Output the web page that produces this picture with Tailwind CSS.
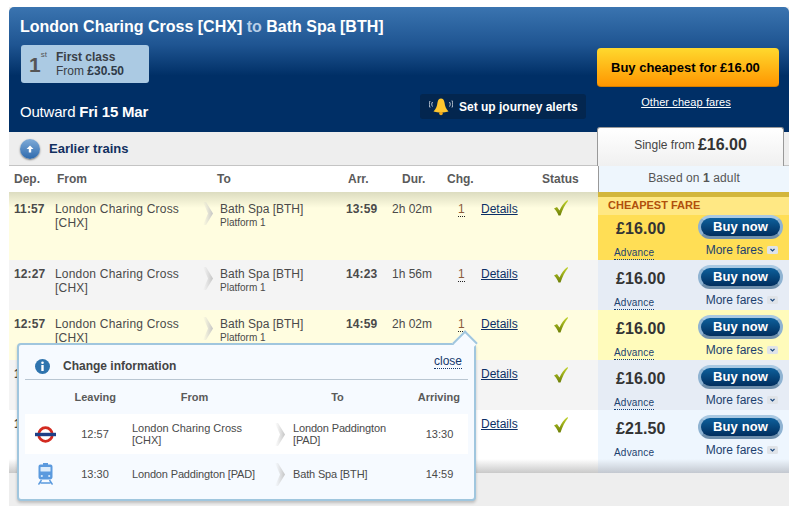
<!DOCTYPE html>
<html lang="en">
<head>
<meta charset="UTF-8" />
<title>Train times</title>
<script src="https://cdn.jsdelivr.net/npm/@tailwindcss/browser@4"></script>
</head>
<body class="bg-white overflow-hidden font-['Liberation_Sans',Arial,sans-serif]">
<svg class="absolute w-0 h-0">
  <defs>
    <linearGradient id="chev" x1="0" y1="0" x2="1" y2="0">
      <stop offset="0" stop-color="#d0d0d0" stop-opacity="0" />
      <stop offset="1" stop-color="#c4c4c4" />
    </linearGradient>
    <linearGradient id="tick" x1="0" y1="0" x2="0" y2="1">
      <stop offset="0" stop-color="#c2d42c" />
      <stop offset="1" stop-color="#6d7f06" />
    </linearGradient>
    <symbol id="arrow" viewBox="0 0 10 23"><path d="M0 0H3L10 11.500 3 23H0L5 11.500Z" fill="url(#chev)" /></symbol>
    <symbol id="check" viewBox="0 0 14 16"><path d="M0 8.500 3 7 5.500 10.500C7.500 6 10 2.500 13.500 0L14 1C11 4.500 8.500 9.500 6.500 15.500H4.500C3.500 12.500 2 10.500 0 8.500Z" fill="url(#tick)" /></symbol>
    <symbol id="down" viewBox="0 0 11 8"><rect width="11" height="8" rx="1.500" fill="#dfe3e8" /><path d="M3.500 3 5.500 5 7.500 3" fill="none" stroke="#1c4a80" stroke-width="1.200" /></symbol>
  </defs>
</svg>

<div class="relative ml-[9px] mt-[7px] w-[780px] h-[499px] bg-[#eeeeee]">

  <!-- Header -->
  <div class="relative h-[125px] rounded-t-[5px] bg-[linear-gradient(#3a74b0_0%,#1f5592_30%,#002f66_55%,#002f66_100%)] flex justify-between">
    <div class="pl-[11px] pt-[11px]">
      <h1 class="text-[16px] leading-[18px] font-bold text-white whitespace-nowrap">London Charing Cross [CHX] <span class="text-[#b9cfe8]">to</span> Bath Spa [BTH]</h1>
      <div class="mt-[9px] ml-[1px] w-[128px] h-[38px] rounded-[3px] bg-[#abcae3] flex items-center">
        <div class="w-[35px] pl-[8px] text-[21px] font-bold text-[#555] leading-none">1<sup class="text-[8px] font-normal align-top relative top-[1px]">st</sup></div>
        <div class="text-[12px] leading-[14px] text-[#3a3f46]">
          <div class="font-bold">First class</div>
          <div>From <b class="text-[#2f3a48]">£30.50</b></div>
        </div>
      </div>
      <div class="mt-[20px] text-[15px] leading-[18px] text-white tracking-[-0.2px]">Outward <b>Fri 15 Mar</b></div>
    </div>
    <div class="flex items-start">
      <div class="mt-[87px] mr-[11px] w-[166px] h-[25px] rounded-[3px] bg-[#03264f] flex items-center pl-[9px] gap-[6px]">
        <svg class="w-[24px] h-[20px]" viewBox="0 0 24 20">
          <path d="M12 1.500C14 1.500 15 3 15.500 5.500 16 9.500 17 12 19.500 14.500 15 16 9 16 4.500 14.500 7 12 8 9.500 8.500 5.500 9 3 10 1.500 12 1.500Z" fill="#ffc62e" />
          <circle cx="12" cy="16.500" r="1.800" fill="#f2a91c" />
          <path d="M3.500 5C2.500 6.500 2.500 8 3.500 9.500M1 4C0 6 0 8.500 1 10.500M20.500 5C21.500 6.500 21.500 8 20.500 9.500M23 3.500C24 6 24 8.500 23 10.500" fill="none" stroke="#c4ccd6" stroke-width="1" />
        </svg>
        <span class="text-[12px] font-bold text-white whitespace-nowrap">Set up journey alerts</span>
      </div>
      <div class="mt-[41px] mr-[10px] w-[182px] flex flex-col items-center">
        <div class="w-[182px] h-[39px] pt-[1px] rounded-[4px] border-b border-[#d67f00] bg-[linear-gradient(#ffd92e,#ff9600)] flex items-center pl-[14px] text-[13px] font-bold text-black whitespace-nowrap">Buy cheapest for £16.00</div>
        <a class="mt-[9px] pr-[4px] text-[11px] leading-[13px] tracking-[0.1px] text-white underline whitespace-nowrap">Other cheap fares</a>
      </div>
    </div>
  </div>

  <!-- Earlier trains bar -->
  <div class="h-[34px] border-b border-[#c4c4c4] flex items-center pl-[11px] gap-[9px]">
    <div class="w-[20px] h-[20px] rounded-full bg-[linear-gradient(#7fabd8,#2e69ac)] shadow-[0_1px_2px_rgba(0,0,0,0.5)] flex items-center justify-center">
      <svg class="w-[10px] h-[10px]" viewBox="0 0 10 10"><path d="M5 1.500 8.500 5H6.200V8.500H3.800V5H1.500Z" fill="#fff" /></svg>
    </div>
    <span class="text-[13px] font-bold text-[#12305f]">Earlier trains</span>
  </div>

  <!-- Single fare tab -->
  <div class="absolute left-[588px] top-[120px] w-[187px] h-[39px] pb-[4px] rounded-t-[3px] border border-b-0 border-[#999] bg-[linear-gradient(#ffffff,#f0f0f0)] flex items-center justify-center gap-[3px] text-[12px] text-[#444]">
    <span>Single from</span><b class="text-[16px] text-[#333]">£16.00</b>
  </div>

  <!-- Column heads -->
  <div class="h-[26px] bg-white flex items-center text-[12px] font-bold text-[#5a5a5a]">
    <div class="w-[46px] pl-[5px]">Dep.</div>
    <div class="w-[162px] pl-[2px]">From</div>
    <div class="w-[131px]">To</div>
    <div class="w-[54px]">Arr.</div>
    <div class="w-[45px]">Dur.</div>
    <div class="w-[95px]">Chg.</div>
    <div class="w-[56px]">Status</div>
    <div class="w-[191px] h-full pb-[2px] border-l border-[#999] bg-[#eef6fd] flex items-center justify-center font-normal text-[#555] tracking-[0.1px]"><span>Based on <b>1</b> adult</span></div>
  </div>

  <!-- Row 1: cheapest -->
  <div class="flex h-[68px] text-[12px] leading-[14px] text-[#4a4a4a]">
    <div class="flex-1 flex pt-[10px] bg-[linear-gradient(#dcdcc0_0px,#fffde0_16px)]">
      <div class="w-[46px] pl-[5px] font-bold tracking-[0.1px]">11:57</div>
      <div class="w-[148px] tracking-[0.2px]">London Charing Cross<br />[CHX]</div>
      <div class="w-[17px]"><svg class="w-[10px] h-[23px]"><use href="#arrow" /></svg></div>
      <div class="w-[126px]">Bath Spa [BTH]<div class="text-[10px] leading-[13px]">Platform 1</div></div>
      <div class="w-[46px] font-bold tracking-[0.1px]">13:59</div>
      <div class="w-[66px]">2h 02m</div>
      <div class="w-[23px]"><span class="border-b border-dotted border-[#222] text-[#8a5a3a]">1</span></div>
      <div class="w-[60px] text-[#0b2f66] underline">Details</div>
      <div class="w-[57px] pl-[13px] -mt-[2px]"><svg class="w-[14px] h-[16px]"><use href="#check" /></svg></div>
    </div>
    <div class="w-[191px] bg-[#ffde55]">
      <div class="h-[23px] border-t-[5px] border-[#d3b63c] bg-[#ffe884] pl-[10px] text-[11px] leading-[16px] font-bold text-[#b0500c]">CHEAPEST FARE</div>
      <div class="relative h-[50px] -mt-[5px] text-[#1c3f6e]">
        <div class="flex justify-between pl-[18px] pr-[6px] pt-[5px]">
          <b class="text-[16px] leading-[27px] tracking-[0.1px] text-[#333]">£16.00</b>
          <div class="w-[85px] h-[24px] rounded-full border-[3px] border-t-[#a9c9e3] border-x-[#8fb3d2] border-b-[#6f8fac] bg-[linear-gradient(#0d609c,#012e5e)] text-white font-bold text-[13px] leading-[17px] text-center tracking-[0.1px]">Buy now</div>
        </div>
        <div class="flex justify-between pl-[16px] pr-[11px]">
          <span class="mt-[4px] text-[10px] leading-[13px] tracking-[0.2px] border-b border-dotted border-[#12407a]">Advance</span>
          <span class="flex items-center gap-[4px] leading-[16px] h-[14px] mt-[1px]">More fares <svg class="w-[11px] h-[8px]"><use href="#down" /></svg></span>
        </div>
      </div>
    </div>
  </div>

  <!-- Row 2 -->
  <div class="flex h-[50px] text-[12px] leading-[14px] text-[#4a4a4a]">
    <div class="flex-1 flex pt-[7px] bg-[#f4f4f4]">
      <div class="w-[46px] pl-[5px] font-bold tracking-[0.1px]">12:27</div>
      <div class="w-[148px] tracking-[0.2px]">London Charing Cross<br />[CHX]</div>
      <div class="w-[17px]"><svg class="w-[10px] h-[23px]"><use href="#arrow" /></svg></div>
      <div class="w-[126px]">Bath Spa [BTH]<div class="text-[10px] leading-[13px]">Platform 1</div></div>
      <div class="w-[46px] font-bold tracking-[0.1px]">14:23</div>
      <div class="w-[66px]">1h 56m</div>
      <div class="w-[23px]"><span class="border-b border-dotted border-[#222] text-[#8a5a3a]">1</span></div>
      <div class="w-[60px] text-[#0b2f66] underline">Details</div>
      <div class="w-[57px] pl-[13px]"><svg class="w-[14px] h-[16px]"><use href="#check" /></svg></div>
    </div>
    <div class="w-[191px] bg-[#e6ecf5] text-[#1c3f6e]">
      <div class="flex justify-between pl-[18px] pr-[6px] pt-[5px]">
        <b class="text-[16px] leading-[27px] tracking-[0.1px] text-[#333]">£16.00</b>
        <div class="w-[85px] h-[24px] rounded-full border-[3px] border-t-[#a9c9e3] border-x-[#8fb3d2] border-b-[#6f8fac] bg-[linear-gradient(#0d609c,#012e5e)] text-white font-bold text-[13px] leading-[17px] text-center tracking-[0.1px]">Buy now</div>
      </div>
      <div class="flex justify-between pl-[16px] pr-[11px]">
        <span class="mt-[4px] text-[10px] leading-[13px] tracking-[0.2px] border-b border-dotted border-[#12407a]">Advance</span>
        <span class="flex items-center gap-[4px] leading-[16px] h-[14px] mt-[1px]">More fares <svg class="w-[11px] h-[8px]"><use href="#down" /></svg></span>
      </div>
    </div>
  </div>

  <!-- Row 3 -->
  <div class="flex h-[50px] text-[12px] leading-[14px] text-[#4a4a4a]">
    <div class="flex-1 flex pt-[7px] bg-[#fffde0]">
      <div class="w-[46px] pl-[5px] font-bold tracking-[0.1px]">12:57</div>
      <div class="w-[148px] tracking-[0.2px]">London Charing Cross<br />[CHX]</div>
      <div class="w-[17px]"><svg class="w-[10px] h-[23px]"><use href="#arrow" /></svg></div>
      <div class="w-[126px]">Bath Spa [BTH]<div class="text-[10px] leading-[13px]">Platform 1</div></div>
      <div class="w-[46px] font-bold tracking-[0.1px]">14:59</div>
      <div class="w-[66px]">2h 02m</div>
      <div class="w-[23px]"><span class="border-b border-dotted border-[#222] text-[#8a5a3a]">1</span></div>
      <div class="w-[60px] text-[#0b2f66] underline">Details</div>
      <div class="w-[57px] pl-[13px]"><svg class="w-[14px] h-[16px]"><use href="#check" /></svg></div>
    </div>
    <div class="w-[191px] bg-[#fffbbb] text-[#1c3f6e]">
      <div class="flex justify-between pl-[18px] pr-[6px] pt-[5px]">
        <b class="text-[16px] leading-[27px] tracking-[0.1px] text-[#333]">£16.00</b>
        <div class="w-[85px] h-[24px] rounded-full border-[3px] border-t-[#a9c9e3] border-x-[#8fb3d2] border-b-[#6f8fac] bg-[linear-gradient(#0d609c,#012e5e)] text-white font-bold text-[13px] leading-[17px] text-center tracking-[0.1px]">Buy now</div>
      </div>
      <div class="flex justify-between pl-[16px] pr-[11px]">
        <span class="mt-[4px] text-[10px] leading-[13px] tracking-[0.2px] border-b border-dotted border-[#12407a]">Advance</span>
        <span class="flex items-center gap-[4px] leading-[16px] h-[14px] mt-[1px]">More fares <svg class="w-[11px] h-[8px]"><use href="#down" /></svg></span>
      </div>
    </div>
  </div>

  <!-- Row 4 -->
  <div class="flex h-[50px] text-[12px] leading-[14px] text-[#4a4a4a]">
    <div class="flex-1 flex pt-[7px] bg-[#f4f4f4]">
      <div class="w-[472px] pl-[5px] font-bold">1</div>
      <div class="w-[60px] text-[#0b2f66] underline">Details</div>
      <div class="w-[57px] pl-[13px]"><svg class="w-[14px] h-[16px]"><use href="#check" /></svg></div>
    </div>
    <div class="w-[191px] bg-[#e6ecf5] text-[#1c3f6e]">
      <div class="flex justify-between pl-[18px] pr-[6px] pt-[5px]">
        <b class="text-[16px] leading-[27px] tracking-[0.1px] text-[#333]">£16.00</b>
        <div class="w-[85px] h-[24px] rounded-full border-[3px] border-t-[#a9c9e3] border-x-[#8fb3d2] border-b-[#6f8fac] bg-[linear-gradient(#0d609c,#012e5e)] text-white font-bold text-[13px] leading-[17px] text-center tracking-[0.1px]">Buy now</div>
      </div>
      <div class="flex justify-between pl-[16px] pr-[11px]">
        <span class="mt-[4px] text-[10px] leading-[13px] tracking-[0.2px] border-b border-dotted border-[#12407a]">Advance</span>
        <span class="flex items-center gap-[4px] leading-[16px] h-[14px] mt-[1px]">More fares <svg class="w-[11px] h-[8px]"><use href="#down" /></svg></span>
      </div>
    </div>
  </div>

  <!-- Row 5 -->
  <div class="flex h-[50px] text-[12px] leading-[14px] text-[#4a4a4a]">
    <div class="flex-1 flex pt-[7px] bg-white">
      <div class="w-[472px] pl-[5px] font-bold">1</div>
      <div class="w-[60px] text-[#0b2f66] underline">Details</div>
      <div class="w-[57px] pl-[13px]"><svg class="w-[14px] h-[16px]"><use href="#check" /></svg></div>
    </div>
    <div class="w-[191px] bg-[#eef6fe] text-[#1c3f6e]">
      <div class="flex justify-between pl-[18px] pr-[6px] pt-[5px]">
        <b class="text-[16px] leading-[27px] tracking-[0.1px] text-[#333]">£21.50</b>
        <div class="w-[85px] h-[24px] rounded-full border-[3px] border-t-[#a9c9e3] border-x-[#8fb3d2] border-b-[#6f8fac] bg-[linear-gradient(#0d609c,#012e5e)] text-white font-bold text-[13px] leading-[17px] text-center tracking-[0.1px]">Buy now</div>
      </div>
      <div class="flex justify-between pl-[16px] pr-[11px]">
        <span class="mt-[4px] text-[10px] leading-[13px] tracking-[0.2px] border-b border-dotted border-[#12407a]">Advance</span>
        <span class="flex items-center gap-[4px] leading-[16px] h-[14px] mt-[1px]">More fares <svg class="w-[11px] h-[8px]"><use href="#down" /></svg></span>
      </div>
    </div>
  </div>

  <!-- Table bottom shade -->
  <div class="flex h-[14px] -mt-[1px]">
    <div class="flex-1 bg-[linear-gradient(#ffffff,#c9c9c9)]"></div>
    <div class="w-[191px] bg-[linear-gradient(#eef6fe,#c3c8d0)]"></div>
  </div>

  <!-- Change information popover -->
  <div class="absolute left-[8px] top-[336px] w-[459px] h-[158px] rounded-[4px] border-[2px] border-[#a0c6de] bg-[#f6faff] shadow-[0_2px_3px_rgba(0,0,0,0.2)]">
    <div class="absolute right-[0px] -top-[11px] w-[18px] h-[18px] rotate-45 border-l-[2px] border-t-[2px] border-[#a0c6de] bg-[#f6faff]"></div>
    <div class="relative mx-[6px]">
      <div class="relative h-[35px] border-b border-[#b9c6d2] flex items-center pt-[8px]">
        <svg class="ml-[10px] w-[15px] h-[15px]" viewBox="0 0 15 15">
          <circle cx="7.500" cy="7.500" r="7.500" fill="#2f74ae" />
          <circle cx="7.500" cy="3.800" r="1.300" fill="#fff" />
          <rect x="6.300" y="6" width="2.400" height="6" fill="#fff" />
        </svg>
        <span class="ml-[13px] text-[12px] font-bold text-[#444]">Change information</span>
        <a class="ml-auto mr-[6px] -mt-[10px] text-[12px] leading-[14px] text-[#14376b] border-b border-dotted border-[#14376b]">close</a>
      </div>
      <div class="h-[34px] flex items-center text-[11px] font-bold text-[#5a5a5a]">
        <div class="w-[98px] text-right pr-[7px]">Leaving</div>
        <div class="w-[143px] text-center">From</div>
        <div class="w-[143px] text-center">To</div>
        <div class="flex-1 text-right pr-[8px]">Arriving</div>
      </div>
      <div class="h-[40px] bg-white flex items-center text-[11px] leading-[12px] text-[#4a4a4a]">
        <div class="w-[37px] pl-[10px] flex">
          <svg class="w-[21px] h-[17px]" viewBox="0 0 21 17">
            <circle cx="10.500" cy="8.500" r="6.800" fill="none" stroke="#d32a20" stroke-width="2.800" />
            <rect x="0" y="6.800" width="21" height="3.400" fill="#1d3f86" />
          </svg>
        </div>
        <div class="w-[70px] text-center pr-[4px]">12:57</div>
        <div class="w-[143px]">London Charing Cross<br />[CHX]</div>
        <div class="w-[18px]"><svg class="w-[10px] h-[23px]"><use href="#arrow" /></svg></div>
        <div class="w-[130px] tracking-[-0.15px]">London Paddington<br />[PAD]</div>
        <div class="flex-1 text-center pr-[12px]">13:30</div>
      </div>
      <div class="h-[40px] flex items-center text-[11px] leading-[12px] text-[#4a4a4a]">
        <div class="w-[37px] pl-[13px] flex">
          <svg class="w-[15px] h-[22px]" viewBox="0 0 15 22">
            <path d="M5 0H10V1.500H12.500C14 1.500 14.500 2.500 14.500 4V14C14.500 15.500 13.500 16.500 12 16.500H3C1.500 16.500 0.500 15.500 0.500 14V4C0.500 2.500 1 1.500 2.500 1.500H5Z" fill="#5b9ade" />
            <rect x="2.500" y="4" width="10" height="4.500" rx="0.500" fill="#dcecfb" />
            <circle cx="3.800" cy="13" r="1.100" fill="#dcecfb" />
            <circle cx="11.200" cy="13" r="1.100" fill="#dcecfb" />
            <path d="M3.500 17 0.500 21.500M11.500 17 14.500 21.500M2.500 20H12.500" fill="none" stroke="#5b9ade" stroke-width="1.400" />
          </svg>
        </div>
        <div class="w-[70px] text-center pr-[4px]">13:30</div>
        <div class="w-[143px] whitespace-nowrap tracking-[-0.15px]">London Paddington [PAD]</div>
        <div class="w-[18px]"><svg class="w-[10px] h-[23px]"><use href="#arrow" /></svg></div>
        <div class="w-[130px] tracking-[-0.15px]">Bath Spa [BTH]</div>
        <div class="flex-1 text-center pr-[12px]">14:59</div>
      </div>
    </div>
  </div>
</div>
</body>
</html>
